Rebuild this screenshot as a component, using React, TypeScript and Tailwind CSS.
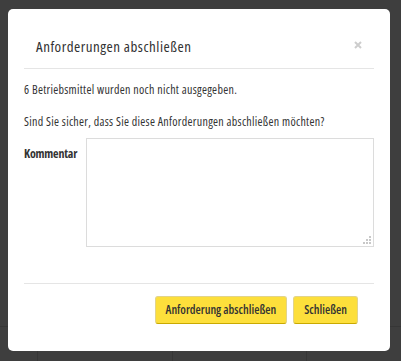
import React from "react";

function YellowButton({ children }: { children: React.ReactNode }) {
  return (
    <button className="h-[28px] px-[10px] bg-[#fddf3b] border border-[#e2d48a] border-b-[#c9a900] rounded-[3px] text-[12px] leading-none text-[#333] font-['Open_Sans',sans-serif] font-stretch-[75%] font-semibold">
      {children}
    </button>
  );
}

export default function App() {
  return (
    <div className="relative w-[401px] h-[361px] bg-[#3e3e3e] overflow-hidden font-['Open_Sans',sans-serif] font-stretch-[75%]">
      {/* dimmed page behind the overlay */}
      <div className="flex flex-col h-full">
        <div className="h-[327px] border-b border-[#363636]" />
        <div className="flex-1 flex">
          <div className="w-[38px] border-r border-[#363636]" />
          <div className="w-[135px] border-r border-[#363636]" />
          <div className="w-[134px] border-r border-[#363636]" />
          <div className="flex-1" />
        </div>
      </div>
      <div className="absolute left-[8px] top-[9px] w-[382px] h-[342px] bg-white rounded-[5px] px-[16px] flex flex-col text-[#333]">
        <div className="h-[60px] border-b border-[#e5e5e5] flex items-center justify-between pl-[12px] pr-[12px] pt-[16px]">
          <div className="text-[15px] tracking-[0.5px] font-medium leading-none">Anforderungen abschließen</div>
          <svg width="8" height="8" viewBox="0 0 8 8" className="-mt-[4px]">
            <path d="M1 1 L7 7 M7 1 L1 7" stroke="#cdcdcd" strokeWidth="2" />
          </svg>
        </div>
        <div className="flex flex-col">
          <div className="text-[12px] tracking-[0.3px] font-medium leading-[14px] mt-[14px]">6 Betriebsmittel wurden noch nicht ausgegeben.</div>
          <div className="text-[12px] tracking-[0.3px] font-medium leading-[14px] mt-[18px]">Sind Sie sicher, dass Sie diese Anforderungen abschließen möchten?</div>
          <div className="flex mt-[9px]">
            <div className="w-[62px] text-[12px] font-bold tracking-[-0.2px] leading-[14px] pt-[9px]">Kommentar</div>
            <div className="relative w-[288px] h-[109px] border border-[#dcdcdc]">
              <svg className="absolute right-[2px] bottom-[2px]" width="8" height="8" viewBox="0 0 8 8">
                <rect x="6" y="0" width="2" height="2" fill="#c8c8c8" />
                <rect x="3" y="3" width="2" height="2" fill="#c8c8c8" />
                <rect x="6" y="3" width="2" height="2" fill="#c8c8c8" />
                <rect x="0" y="6" width="2" height="2" fill="#c8c8c8" />
                <rect x="3" y="6" width="2" height="2" fill="#c8c8c8" />
                <rect x="6" y="6" width="2" height="2" fill="#c8c8c8" />
              </svg>
            </div>
          </div>
        </div>
        <div className="mt-[36px] border-t border-[#e5e5e5] flex justify-end gap-[6px] pt-[12px] pr-[16px]">
          <YellowButton>Anforderung abschließen</YellowButton>
          <YellowButton>Schließen</YellowButton>
        </div>
      </div>
    </div>
  );
}
